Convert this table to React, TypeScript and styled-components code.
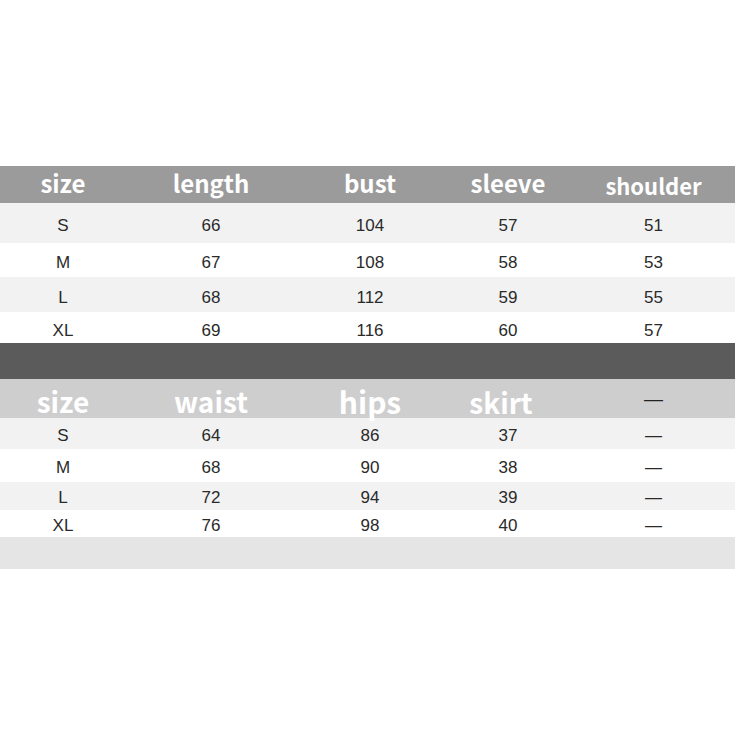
import React from 'react';
import styled, { createGlobalStyle } from 'styled-components';

const GlobalStyle = createGlobalStyle`
  body {
    margin: 0;
    background: #ffffff;
  }
`;

// column widths picked so every column centre lines up with the picture
const COLUMNS = '126px 170px 148px 128px 163px';

const topHead = ['size', 'length', 'bust', 'sleeve', 'shoulder'];
const topRows = [
  { cells: ['S', '66', '104', '57', '51'], height: 40, shade: true },
  { cells: ['M', '67', '108', '58', '53'], height: 34, shade: false },
  { cells: ['L', '68', '112', '59', '55'], height: 35, shade: true },
  { cells: ['XL', '69', '116', '60', '57'], height: 31, shade: false },
];

const bottomHead = ['size', 'waist', 'hips', 'skirt'];
const bottomRows = [
  { cells: ['S', '64', '86', '37', '—'], height: 31, shade: true },
  { cells: ['M', '68', '90', '38', '—'], height: 33, shade: false },
  { cells: ['L', '72', '94', '39', '—'], height: 28, shade: true },
  { cells: ['XL', '76', '98', '40', '—'], height: 27, shade: false },
];

const App = () => {
  return (
    <>
      <GlobalStyle />
      <StyledPage>
        <StyledHeadRow $bg="#9b9b9b" $height={37}>
          {topHead.map((label) => (
            <StyledHeadCell key={label} $size={label === 'shoulder' ? 22 : 24} $drop={label === 'shoulder' ? -1 : -4}>
              {label}
            </StyledHeadCell>
          ))}
        </StyledHeadRow>
        {topRows.map((row) => (
          <StyledRow key={row.cells[0]} $height={row.height} $shade={row.shade}>
            {row.cells.map((value, i) => (
              <StyledCell key={i} $drop={5}>{value}</StyledCell>
            ))}
          </StyledRow>
        ))}

        <StyledDivider />

        <StyledHeadRow $bg="#cfcecf" $height={39}>
          {bottomHead.map((label) => (
            <StyledHeadCell key={label} $size={label === 'hips' ? 30 : 28} $drop={label === 'skirt' ? 6 : 3} $shift={label === 'skirt' ? -7 : 0}>
              {label}
            </StyledHeadCell>
          ))}
          <StyledDash>—</StyledDash>
        </StyledHeadRow>
        {bottomRows.map((row) => (
          <StyledRow key={row.cells[0]} $height={row.height} $shade={row.shade}>
            {row.cells.map((value, i) => (
              <StyledCell key={i} $drop={3}>{value}</StyledCell>
            ))}
          </StyledRow>
        ))}

        <StyledFooterBand />
      </StyledPage>
    </>
  );
};

export default App;

const StyledPage = styled.div`
  display: flex;
  flex-direction: column;
  width: 735px;
  padding-top: 166px;
`;

const StyledHeadRow = styled.div<{ $bg: string; $height: number }>`
  display: grid;
  grid-template-columns: ${COLUMNS};
  align-items: center;
  height: ${({ $height }) => $height}px;
  background-color: ${({ $bg }) => $bg};
`;

const StyledHeadCell = styled.div<{ $size: number; $drop?: number; $shift?: number }>`
  text-align: center;
  color: #ffffff;
  font-family: 'Noto Sans CJK SC', 'Noto Sans', sans-serif;
  font-weight: 700;
  font-size: ${({ $size }) => $size}px;
  line-height: 1;
  transform: translate(${({ $shift = 0 }) => $shift}px, ${({ $drop = 0 }) => $drop / 2}px);
`;

const StyledDash = styled.div`
  text-align: center;
  color: #222222;
  font-family: 'Liberation Sans', Arial, sans-serif;
  font-size: 19px;
  line-height: 1;
`;

const StyledRow = styled.div<{ $height: number; $shade: boolean }>`
  display: grid;
  grid-template-columns: ${COLUMNS};
  align-items: center;
  height: ${({ $height }) => $height}px;
  background-color: ${({ $shade }) => ($shade ? '#f2f2f2' : '#ffffff')};
`;

const StyledCell = styled.div<{ $drop: number }>`
  text-align: center;
  color: #2a2a2a;
  font-family: 'Liberation Sans', Arial, sans-serif;
  font-size: 17px;
  line-height: 1;
  padding-top: ${({ $drop }) => $drop}px;
`;

const StyledDivider = styled.div`
  height: 36px;
  background-color: #5b5b5b;
`;

const StyledFooterBand = styled.div`
  height: 32px;
  background-color: #e5e5e5;
`;
